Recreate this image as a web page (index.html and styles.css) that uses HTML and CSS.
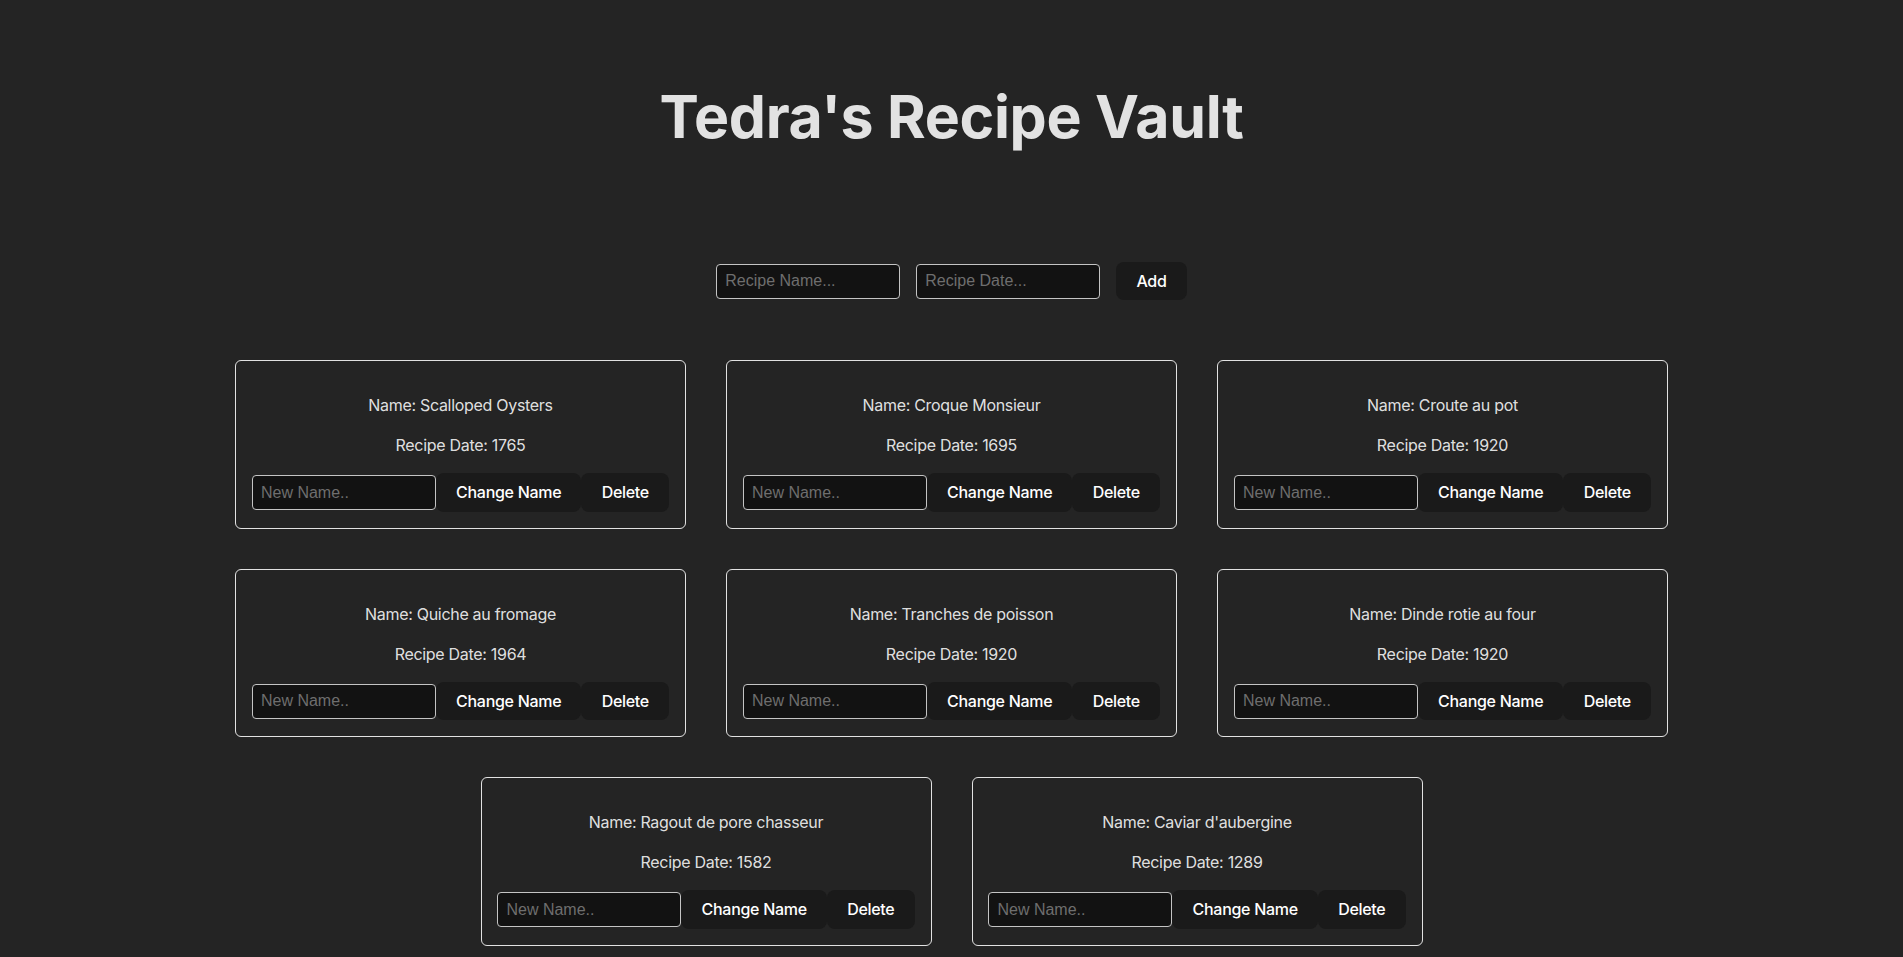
FILE: index.html
```html
<!DOCTYPE html>
<html lang="en">
<head>
<meta charset="UTF-8">
<title>Tedra's Recipe Vault</title>
<link rel="stylesheet" href="styles.css">
</head>
<body>
<div class="app">
  <header class="header">
    <h1 class="title">Tedra's Recipe Vault</h1>
  </header>
  <div class="add-form">
    <input class="field" type="text" placeholder="Recipe Name...">
    <input class="field" type="text" placeholder="Recipe Date...">
    <button class="btn">Add</button>
  </div>
  <div class="cards">
    <div class="card">
      <p class="card-line">Name: Scalloped Oysters</p>
      <p class="card-line">Recipe Date: 1765</p>
      <div class="card-actions"><input class="field" type="text" placeholder="New Name.."><button class="btn">Change Name</button><button class="btn">Delete</button></div>
    </div>
    <div class="card">
      <p class="card-line">Name: Croque Monsieur</p>
      <p class="card-line">Recipe Date: 1695</p>
      <div class="card-actions"><input class="field" type="text" placeholder="New Name.."><button class="btn">Change Name</button><button class="btn">Delete</button></div>
    </div>
    <div class="card">
      <p class="card-line">Name: Croute au pot</p>
      <p class="card-line">Recipe Date: 1920</p>
      <div class="card-actions"><input class="field" type="text" placeholder="New Name.."><button class="btn">Change Name</button><button class="btn">Delete</button></div>
    </div>
    <div class="card">
      <p class="card-line">Name: Quiche au fromage</p>
      <p class="card-line">Recipe Date: 1964</p>
      <div class="card-actions"><input class="field" type="text" placeholder="New Name.."><button class="btn">Change Name</button><button class="btn">Delete</button></div>
    </div>
    <div class="card">
      <p class="card-line">Name: Tranches de poisson</p>
      <p class="card-line">Recipe Date: 1920</p>
      <div class="card-actions"><input class="field" type="text" placeholder="New Name.."><button class="btn">Change Name</button><button class="btn">Delete</button></div>
    </div>
    <div class="card">
      <p class="card-line">Name: Dinde rotie au four</p>
      <p class="card-line">Recipe Date: 1920</p>
      <div class="card-actions"><input class="field" type="text" placeholder="New Name.."><button class="btn">Change Name</button><button class="btn">Delete</button></div>
    </div>
    <div class="card">
      <p class="card-line">Name: Ragout de pore chasseur</p>
      <p class="card-line">Recipe Date: 1582</p>
      <div class="card-actions"><input class="field" type="text" placeholder="New Name.."><button class="btn">Change Name</button><button class="btn">Delete</button></div>
    </div>
    <div class="card">
      <p class="card-line">Name: Caviar d'aubergine</p>
      <p class="card-line">Recipe Date: 1289</p>
      <div class="card-actions"><input class="field" type="text" placeholder="New Name.."><button class="btn">Change Name</button><button class="btn">Delete</button></div>
    </div>
  </div>
</div>
</body>
</html>
```
FILE: styles.css
```css
html {
  background-color: #242424;
}
body {
  margin: 0;
  font-family: Inter, "Liberation Sans", sans-serif;
  font-size: 16px;
  line-height: 1.5;
  font-weight: 400;
  color: rgba(255, 255, 255, 0.87);
  background-color: #242424;
}
.app {
  padding: 32px;
  text-align: center;
}
.header {
  padding-top: 53px;
}
.title {
  margin: 0;
  font-size: 59px;
  line-height: 1.1;
  font-weight: 700;
  letter-spacing: -0.3px;
}
.add-form {
  display: flex;
  justify-content: center;
  align-items: center;
  gap: 16px;
  margin-top: 112px;
}
.field {
  box-sizing: border-box;
  flex-shrink: 0;
  width: 184px;
  height: 35px;
  padding: 0 8px;
  border: 1px solid #c4c4c4;
  border-radius: 4px;
  background-color: #121212;
  color: #ffffff;
  font-family: "Liberation Sans", Arial, sans-serif;
  font-size: 16px;
  outline: none;
}
.field::placeholder {
  color: #6e6e6e;
}
.btn {
  flex-shrink: 0;
  white-space: nowrap;
  border-radius: 8px;
  border: 1px solid transparent;
  padding: 8.75px 19.2px;
  font-size: 16px;
  font-weight: 500;
  font-family: Inter, "Liberation Sans", sans-serif;
  line-height: 19px;
  letter-spacing: -0.3px;
  background-color: #1a1a1a;
  color: #ffffff;
  cursor: pointer;
}
.cards {
  display: flex;
  flex-wrap: wrap;
  justify-content: center;
  gap: 40px;
  margin-top: 60px;
}
.card {
  box-sizing: border-box;
  width: 451px;
  padding: 16px;
  border: 1px solid rgba(255, 255, 255, 0.87);
  border-radius: 6px;
}
.card-line {
  margin: 16px 0;
  letter-spacing: -0.3px;
}
.card-actions {
  display: flex;
  justify-content: center;
  align-items: center;
}
```
